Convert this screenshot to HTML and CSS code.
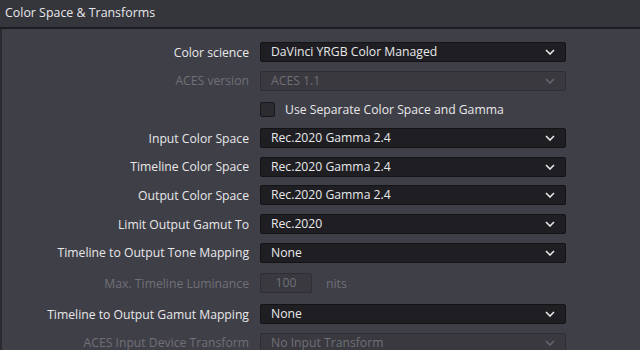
FILE: index.html
```html
<!DOCTYPE html>
<html lang="en">
<head>
  <meta charset="UTF-8">
  <title>Color Space &amp; Transforms</title>
  <link rel="stylesheet" href="styles.css">
</head>
<body>
  <div class="titulo">Color Space &amp; Transforms</div>

  <div class="panel">
    <div class="fila">
      <label>Color science</label>
      <div class="desplegable">DaVinci YRGB Color Managed
        <svg class="flecha" viewBox="0 0 10 6"><path d="M1 1 L5 5 L9 1"/></svg>
      </div>
    </div>
    <div class="fila apagada">
      <label>ACES version</label>
      <div class="desplegable">ACES 1.1
        <svg class="flecha" viewBox="0 0 10 6"><path d="M1 1 L5 5 L9 1"/></svg>
      </div>
    </div>
    <div class="fila">
      <span></span>
      <div class="casilla"><span class="caja"></span>Use Separate Color Space and Gamma</div>
    </div>
    <div class="fila">
      <label>Input Color Space</label>
      <div class="desplegable">Rec.2020 Gamma 2.4
        <svg class="flecha" viewBox="0 0 10 6"><path d="M1 1 L5 5 L9 1"/></svg>
      </div>
    </div>
    <div class="fila">
      <label>Timeline Color Space</label>
      <div class="desplegable">Rec.2020 Gamma 2.4
        <svg class="flecha" viewBox="0 0 10 6"><path d="M1 1 L5 5 L9 1"/></svg>
      </div>
    </div>
    <div class="fila">
      <label>Output Color Space</label>
      <div class="desplegable">Rec.2020 Gamma 2.4
        <svg class="flecha" viewBox="0 0 10 6"><path d="M1 1 L5 5 L9 1"/></svg>
      </div>
    </div>
    <div class="fila">
      <label>Limit Output Gamut To</label>
      <div class="desplegable">Rec.2020
        <svg class="flecha" viewBox="0 0 10 6"><path d="M1 1 L5 5 L9 1"/></svg>
      </div>
    </div>
    <div class="fila">
      <label>Timeline to Output Tone Mapping</label>
      <div class="desplegable">None
        <svg class="flecha" viewBox="0 0 10 6"><path d="M1 1 L5 5 L9 1"/></svg>
      </div>
    </div>
    <div class="fila apagada luminancia">
      <label>Max. Timeline Luminance</label>
      <div class="valor"><span class="numero">100</span>nits</div>
    </div>
    <div class="fila gamut">
      <label>Timeline to Output Gamut Mapping</label>
      <div class="desplegable">None
        <svg class="flecha" viewBox="0 0 10 6"><path d="M1 1 L5 5 L9 1"/></svg>
      </div>
    </div>
    <div class="fila apagada">
      <label>ACES Input Device Transform</label>
      <div class="desplegable">No Input Transform
        <svg class="flecha" viewBox="0 0 10 6"><path d="M1 1 L5 5 L9 1"/></svg>
      </div>
    </div>
  </div>
</body>
</html>
```

FILE: styles.css
```css
body {
  margin: 0;
  height: 350px;
  overflow: hidden;
  font-family: 'Open Sans', sans-serif;
  font-size: 12.2px;
  color: #e8e8ea;
  background: #3f3f47;
}

.titulo {
  height: 27px;
  line-height: 25px;
  padding-left: 5px;
  font-size: 12.4px;
  color: #e8e8ea;
  background: #35353c;
  border-bottom: 2px solid #1c1c21;
}

.panel {
  display: flex;
  flex-direction: column;
  gap: 8.7px;
  padding-top: 13px;
  border-left: 2px solid #2a2a30;
  height: 308px;
  overflow: hidden;
}

.fila {
  display: grid;
  grid-template-columns: 247px 306px;
  column-gap: 11px;
  flex: none;
  height: 20px;
  align-items: center;
}

.fila label {
  text-align: right;
  white-space: nowrap;
}

.desplegable {
  position: relative;
  height: 18px;
  line-height: 18px;
  padding-left: 10px;
  background: #1f1f23;
  border: 1px solid #141417;
  border-radius: 2px;
}

.flecha {
  position: absolute;
  right: 10px;
  top: 6px;
  width: 10px;
  height: 6px;
  fill: none;
  stroke: #e8e8ea;
  stroke-width: 1.6;
}

.apagada {
  color: #707078;
}

.apagada .desplegable {
  background: #39393f;
  border-color: #2e2e34;
}

.apagada .flecha {
  stroke: #65656d;
}

.casilla {
  display: flex;
  align-items: center;
  gap: 10px;
}

.caja {
  width: 13px;
  height: 13px;
  background: #2b2b30;
  border: 1px solid #18181c;
  border-radius: 2px;
}

.luminancia {
  margin-top: 1.5px;
}

.gamut {
  margin-top: 2.5px;
}

.valor {
  display: flex;
  align-items: center;
  gap: 14px;
}

.numero {
  width: 50px;
  height: 18px;
  line-height: 18px;
  text-align: center;
  background: #39393f;
  border: 1px solid #2e2e34;
  border-radius: 2px;
}
```
